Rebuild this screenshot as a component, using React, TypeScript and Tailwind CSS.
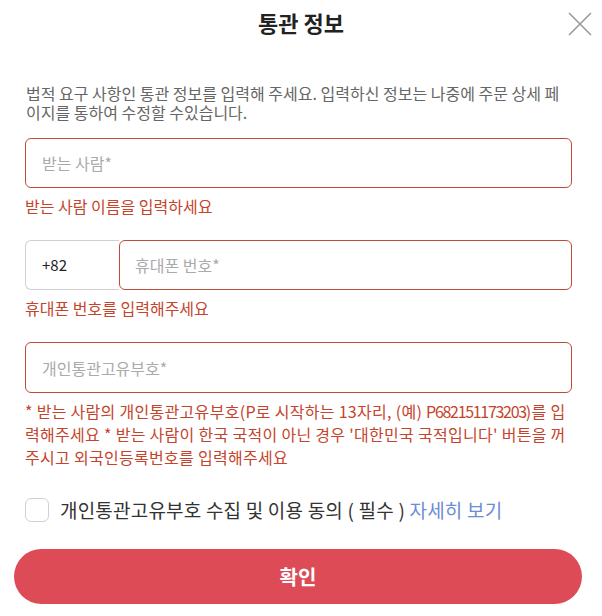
import React, { useState } from "react";

const font = { fontFamily: '"Noto Sans CJK KR", "Noto Sans", sans-serif' };

const CustomsInfoModal: React.FC = () => {
	const [agreed, setAgreed] = useState(false);

	return (
		<div className="relative w-[602px] h-[616px] bg-white overflow-hidden" style={font}>
			{/* header */}
			<div className="pt-[7px] text-center text-[22px] leading-[30px] font-bold text-[#222]">
				통관 정보
			</div>
			<button className="absolute right-[10px] top-[12px] w-[24px] h-[24px]">
				<svg viewBox="0 0 24 24" className="w-[24px] h-[24px]">
					<path d="M1 1 L23 23 M23 1 L1 23" stroke="#9a9a9a" strokeWidth="1.6" fill="none" />
				</svg>
			</button>

			<div className="pl-[25px] pr-[30px]">
				<p className="mt-[47px] pl-[1px] text-[16px] leading-[19px] text-[#666]">
					법적 요구 사항인 통관 정보를 입력해 주세요. 입력하신 정보는 나중에 주문 상세 페이지를 통하여 수정할 수있습니다.
				</p>

				{/* receiver */}
				<input
					className="mt-[16px] block w-full h-[50px] px-[16px] border border-[#bd4b37] rounded-[6px] text-[16px] outline-none placeholder:text-[#aaa]"
					placeholder="받는 사람*"
				/>
				<p className="mt-[8px] text-[16px] leading-[20px] text-[#c4442c]">받는 사람 이름을 입력하세요</p>

				{/* phone */}
				<div className="mt-[24px] flex h-[50px]">
					<div className="w-[94px] flex items-center pl-[16px] border border-[#d0d0d0] border-r-0 rounded-l-[6px] text-[15px] text-[#222]">
						+82
					</div>
					<input
						className="flex-1 min-w-0 px-[15px] border border-[#bd4b37] rounded-[6px] text-[16px] outline-none placeholder:text-[#aaa]"
						placeholder="휴대폰 번호*"
					/>
				</div>
				<p className="mt-[8px] text-[16px] leading-[20px] text-[#c4442c]">휴대폰 번호를 입력해주세요</p>

				{/* customs code */}
				<input
					className="mt-[24px] block w-full h-[51px] px-[16px] border border-[#bd4b37] rounded-[6px] text-[16px] outline-none placeholder:text-[#aaa]"
					placeholder="개인통관고유부호*"
				/>
				<p className="mt-[7px] text-[16px] leading-[23px] tracking-[0.3px] text-[#c4442c]">
					* 받는 사람의 개인통관고유부호(P로 시작하는 13자리, (예){" "}
					<span className="tracking-[-1.3px]">P682151173203</span>)를 입력해주세요 * 받는 사람이 한국 국적이 아닌 경우
					'대한민국 국적입니다' 버튼을 꺼주시고 외국인등록번호를 입력해주세요
				</p>

				{/* agreement */}
				<label className="mt-[29px] flex items-center gap-[11px] cursor-pointer">
					<input
						type="checkbox"
						checked={agreed}
						onChange={(e) => setAgreed(e.target.checked)}
						className="appearance-none shrink-0 w-[24px] h-[24px] border border-[#d0d0d0] rounded-[6px] bg-white"
					/>
					<span className="text-[19px] leading-[24px] tracking-[0.2px] text-[#333]">
						개인통관고유부호 수집 및 이용 동의 ( 필수 ) <span className="text-[#6b8dd3]">자세히 보기</span>
					</span>
				</label>
			</div>

			<button className="mt-[27px] ml-[14px] w-[568px] h-[55px] rounded-full bg-[#dd4b57] text-white text-[20px] font-bold">
				확인
			</button>
		</div>
	);
};

export default function App() {
	return <CustomsInfoModal />;
}
